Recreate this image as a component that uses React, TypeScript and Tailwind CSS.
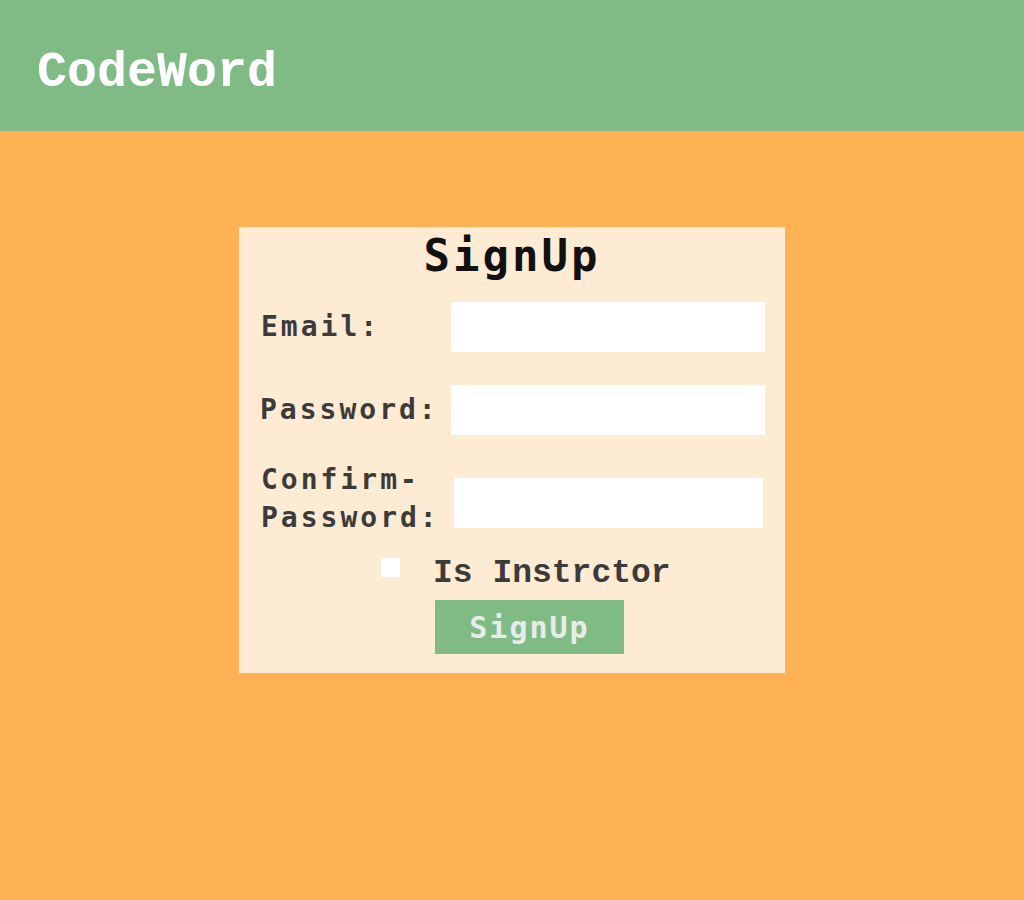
import React from "react";

export default function App() {
  const mono = "font-['DejaVu_Sans_Mono',monospace]";
  return (
    <div className="min-h-[900px] bg-[#feb254]">
      <header className="h-[131px] bg-[#80bb86] flex items-center pl-[37px] pt-[14px]">
        <h1 className="font-['Liberation_Mono',monospace] font-bold text-white text-[50px] leading-none">
          CodeWord
        </h1>
      </header>
      <main className="pt-[96px]">
        <div className="mx-auto w-[546px] h-[446px] bg-[#feebd4] flex flex-col">
          <h2 className={`${mono} h-[58px] flex items-center justify-center text-[44px] font-bold text-[#111] tracking-[3px] leading-none`}>
            SignUp
          </h2>
          <div className="mt-[17px] flex items-center h-[50px]">
            <label className={`${mono} pl-[22px] w-[212px] text-[28px] font-bold text-[#3d3a3a] tracking-[3px]`}>Email:</label>
            <input className="w-[314px] h-[50px] bg-white outline-none" />
          </div>
          <div className="mt-[33px] flex items-center h-[50px]">
            <label className={`${mono} pl-[21px] w-[212px] text-[28px] font-bold text-[#3d3a3a] tracking-[3px]`}>Password:</label>
            <input type="password" className="w-[314px] h-[50px] bg-white outline-none" />
          </div>
          <div className="mt-[24px] flex items-center h-[80px]">
            <label className={`${mono} pl-[22px] w-[215px] text-[28px] leading-[38px] font-bold text-[#3d3a3a] tracking-[3px]`}>
              Confirm-
              <br />
              Password:
            </label>
            <input type="password" className="mt-[8px] w-[309px] h-[50px] bg-white outline-none" />
          </div>
          <div className="mt-[13px] flex items-center h-[30px]">
            <span className="ml-[142px] w-[19px] h-[19px] bg-white" />
            <span className="ml-[33px] mt-[12px] font-['Liberation_Mono',monospace] font-bold text-[33px] text-[#3d3a3a] leading-none">
              Is Instrctor
            </span>
          </div>
          <div className="mt-[18px] flex justify-center">
            <button className={`${mono} ml-[35px] w-[189px] h-[54px] bg-[#80bb86] text-[#e8ece8] text-[30px] font-bold tracking-[2px]`}>
              SignUp
            </button>
          </div>
        </div>
      </main>
    </div>
  );
}
